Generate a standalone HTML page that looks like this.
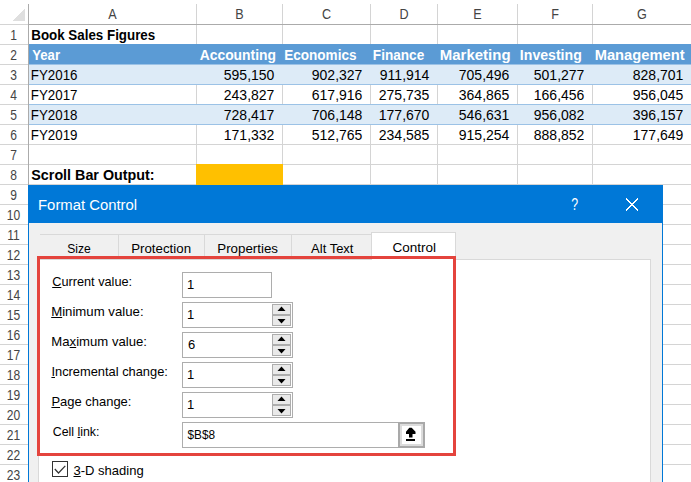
<!DOCTYPE html>
<html><head><meta charset="utf-8"><title>Format Control</title>
<style>html,body{margin:0;padding:0;background:#fff;width:691px;height:482px;overflow:hidden}svg{display:block}text{font-family:"Liberation Sans",sans-serif}</style>
</head><body>
<svg width="691" height="482" viewBox="0 0 691 482" font-family="Liberation Sans, sans-serif" shape-rendering="crispEdges"><rect x="0" y="0" width="691" height="482" fill="#ffffff" />
<polygon points="25.2,8.3 25.2,21 12.6,21" fill="#dfdfdf"/>
<rect x="0" y="24" width="28" height="1" fill="#d4d4d4" />
<rect x="0" y="44" width="28" height="1" fill="#d4d4d4" />
<rect x="0" y="64" width="28" height="1" fill="#d4d4d4" />
<rect x="0" y="84" width="28" height="1" fill="#d4d4d4" />
<rect x="0" y="104" width="28" height="1" fill="#d4d4d4" />
<rect x="0" y="124" width="28" height="1" fill="#d4d4d4" />
<rect x="0" y="144" width="28" height="1" fill="#d4d4d4" />
<rect x="0" y="164" width="28" height="1" fill="#d4d4d4" />
<rect x="0" y="184" width="28" height="1" fill="#d4d4d4" />
<rect x="0" y="204" width="28" height="1" fill="#d4d4d4" />
<rect x="0" y="224" width="28" height="1" fill="#d4d4d4" />
<rect x="0" y="244" width="28" height="1" fill="#d4d4d4" />
<rect x="0" y="264" width="28" height="1" fill="#d4d4d4" />
<rect x="0" y="284" width="28" height="1" fill="#d4d4d4" />
<rect x="0" y="304" width="28" height="1" fill="#d4d4d4" />
<rect x="0" y="324" width="28" height="1" fill="#d4d4d4" />
<rect x="0" y="344" width="28" height="1" fill="#d4d4d4" />
<rect x="0" y="364" width="28" height="1" fill="#d4d4d4" />
<rect x="0" y="384" width="28" height="1" fill="#d4d4d4" />
<rect x="0" y="404" width="28" height="1" fill="#d4d4d4" />
<rect x="0" y="424" width="28" height="1" fill="#d4d4d4" />
<rect x="0" y="444" width="28" height="1" fill="#d4d4d4" />
<rect x="0" y="464" width="28" height="1" fill="#d4d4d4" />
<rect x="29" y="44" width="662" height="1" fill="#d4d4d4" />
<rect x="29" y="64" width="662" height="1" fill="#d4d4d4" />
<rect x="29" y="84" width="662" height="1" fill="#d4d4d4" />
<rect x="29" y="104" width="662" height="1" fill="#d4d4d4" />
<rect x="29" y="124" width="662" height="1" fill="#d4d4d4" />
<rect x="29" y="144" width="662" height="1" fill="#d4d4d4" />
<rect x="29" y="164" width="662" height="1" fill="#d4d4d4" />
<rect x="29" y="184" width="662" height="1" fill="#d4d4d4" />
<rect x="29" y="204" width="662" height="1" fill="#d4d4d4" />
<rect x="29" y="224" width="662" height="1" fill="#d4d4d4" />
<rect x="29" y="244" width="662" height="1" fill="#d4d4d4" />
<rect x="29" y="264" width="662" height="1" fill="#d4d4d4" />
<rect x="29" y="284" width="662" height="1" fill="#d4d4d4" />
<rect x="29" y="304" width="662" height="1" fill="#d4d4d4" />
<rect x="29" y="324" width="662" height="1" fill="#d4d4d4" />
<rect x="29" y="344" width="662" height="1" fill="#d4d4d4" />
<rect x="29" y="364" width="662" height="1" fill="#d4d4d4" />
<rect x="29" y="384" width="662" height="1" fill="#d4d4d4" />
<rect x="29" y="404" width="662" height="1" fill="#d4d4d4" />
<rect x="29" y="424" width="662" height="1" fill="#d4d4d4" />
<rect x="29" y="444" width="662" height="1" fill="#d4d4d4" />
<rect x="29" y="464" width="662" height="1" fill="#d4d4d4" />
<rect x="196" y="4" width="1" height="20" fill="#d4d4d4" />
<rect x="196" y="25" width="1" height="457" fill="#d4d4d4" />
<rect x="282" y="4" width="1" height="20" fill="#d4d4d4" />
<rect x="282" y="25" width="1" height="457" fill="#d4d4d4" />
<rect x="370" y="4" width="1" height="20" fill="#d4d4d4" />
<rect x="370" y="25" width="1" height="457" fill="#d4d4d4" />
<rect x="437" y="4" width="1" height="20" fill="#d4d4d4" />
<rect x="437" y="25" width="1" height="457" fill="#d4d4d4" />
<rect x="517" y="4" width="1" height="20" fill="#d4d4d4" />
<rect x="517" y="25" width="1" height="457" fill="#d4d4d4" />
<rect x="592" y="4" width="1" height="20" fill="#d4d4d4" />
<rect x="592" y="25" width="1" height="457" fill="#d4d4d4" />
<rect x="28" y="24" width="663" height="1" fill="#ababab" />
<rect x="28" y="4" width="1" height="478" fill="#ababab" />
<rect x="29" y="44" width="662" height="20" fill="#5b9bd5" />
<rect x="29" y="64" width="662" height="21" fill="#ddebf7" />
<rect x="29" y="64" width="662" height="1" fill="#9bc2e6" />
<rect x="29" y="84" width="662" height="1" fill="#9bc2e6" />
<rect x="29" y="104" width="662" height="21" fill="#ddebf7" />
<rect x="29" y="104" width="662" height="1" fill="#9bc2e6" />
<rect x="29" y="124" width="662" height="1" fill="#9bc2e6" />
<rect x="196" y="164" width="87" height="21" fill="#ffc000" />
<rect x="28" y="185" width="635" height="297" fill="#0078d7" />
<rect x="29" y="223" width="633" height="259" fill="#f0f0f0" />
<path d="M626,198.5 L638,210.5 M638,198.5 L626,210.5" stroke="#ffffff" stroke-width="1.1" fill="none"/>
<rect x="40" y="234" width="331" height="1" fill="#d9d9d9" />
<rect x="118" y="234" width="1" height="25" fill="#d9d9d9" />
<rect x="204" y="234" width="1" height="25" fill="#d9d9d9" />
<rect x="291" y="234" width="1" height="25" fill="#d9d9d9" />
<rect x="38" y="259" width="613" height="223" fill="#d9d9d9" />
<rect x="39" y="260" width="611" height="222" fill="#ffffff" />
<rect x="371" y="232" width="85" height="28" fill="#d9d9d9" />
<rect x="372" y="233" width="83" height="27" fill="#ffffff" />
<rect x="38.5" y="257.5" width="416" height="197" fill="none" stroke="#e4443d" stroke-width="3"/>
<rect x="182" y="272" width="90" height="26" fill="#adadad" />
<rect x="183" y="273" width="88" height="24" fill="#ffffff" />
<rect x="182" y="302" width="111" height="26" fill="#adadad" />
<rect x="183" y="303" width="109" height="24" fill="#ffffff" />
<rect x="272" y="304" width="19" height="11" fill="#adadad" />
<rect x="273" y="305" width="17" height="9" fill="#e9e9e9" />
<polygon points="277.5,311 285.5,311 281.5,306.5" fill="#000" shape-rendering="auto"/>
<rect x="272" y="315" width="19" height="11" fill="#adadad" />
<rect x="273" y="316" width="17" height="9" fill="#e9e9e9" />
<polygon points="277.5,319 285.5,319 281.5,323.5" fill="#000" shape-rendering="auto"/>
<rect x="182" y="332" width="111" height="26" fill="#adadad" />
<rect x="183" y="333" width="109" height="24" fill="#ffffff" />
<rect x="272" y="334" width="19" height="11" fill="#adadad" />
<rect x="273" y="335" width="17" height="9" fill="#e9e9e9" />
<polygon points="277.5,341 285.5,341 281.5,336.5" fill="#000" shape-rendering="auto"/>
<rect x="272" y="345" width="19" height="11" fill="#adadad" />
<rect x="273" y="346" width="17" height="9" fill="#e9e9e9" />
<polygon points="277.5,349 285.5,349 281.5,353.5" fill="#000" shape-rendering="auto"/>
<rect x="182" y="362" width="111" height="26" fill="#adadad" />
<rect x="183" y="363" width="109" height="24" fill="#ffffff" />
<rect x="272" y="364" width="19" height="11" fill="#adadad" />
<rect x="273" y="365" width="17" height="9" fill="#e9e9e9" />
<polygon points="277.5,371 285.5,371 281.5,366.5" fill="#000" shape-rendering="auto"/>
<rect x="272" y="375" width="19" height="11" fill="#adadad" />
<rect x="273" y="376" width="17" height="9" fill="#e9e9e9" />
<polygon points="277.5,379 285.5,379 281.5,383.5" fill="#000" shape-rendering="auto"/>
<rect x="182" y="392" width="111" height="26" fill="#adadad" />
<rect x="183" y="393" width="109" height="24" fill="#ffffff" />
<rect x="272" y="394" width="19" height="11" fill="#adadad" />
<rect x="273" y="395" width="17" height="9" fill="#e9e9e9" />
<polygon points="277.5,401 285.5,401 281.5,396.5" fill="#000" shape-rendering="auto"/>
<rect x="272" y="405" width="19" height="11" fill="#adadad" />
<rect x="273" y="406" width="17" height="9" fill="#e9e9e9" />
<polygon points="277.5,409 285.5,409 281.5,413.5" fill="#000" shape-rendering="auto"/>
<rect x="182" y="422" width="217" height="26" fill="#adadad" />
<rect x="183" y="423" width="215" height="24" fill="#ffffff" />
<rect x="398" y="422" width="27" height="26" fill="#a9a9a9" />
<rect x="400" y="424" width="23" height="22" fill="#dcdcdc" />
<rect x="402" y="426" width="19" height="18" fill="#ffffff" />
<path d="M409.3,427.8 L411.7,427.8 L415.5,431.8 L415.5,434 L412.5,434 L412.5,437.5 L409,437.5 L409,434 L406,434 L406,431.8 Z" fill="#000" shape-rendering="auto"/>
<rect x="406" y="439" width="9" height="2" fill="#000" />
<rect x="52" y="461" width="16" height="16" fill="#333333" />
<rect x="53" y="462" width="14" height="14" fill="#ffffff" />
<path d="M54.8,469 L58.5,473 L65.3,465.8" stroke="#333" stroke-width="1.2" fill="none" shape-rendering="auto"/>
<g shape-rendering="auto"><text x="112.50" text-anchor="middle" textLength="8.41" lengthAdjust="spacingAndGlyphs" y="19" font-size="14" font-weight="normal" fill="#444444">A</text>
<text x="239.50" text-anchor="middle" textLength="8.41" lengthAdjust="spacingAndGlyphs" y="19" font-size="14" font-weight="normal" fill="#444444">B</text>
<text x="326.50" text-anchor="middle" textLength="9.11" lengthAdjust="spacingAndGlyphs" y="19" font-size="14" font-weight="normal" fill="#444444">C</text>
<text x="404.00" text-anchor="middle" textLength="9.11" lengthAdjust="spacingAndGlyphs" y="19" font-size="14" font-weight="normal" fill="#444444">D</text>
<text x="477.50" text-anchor="middle" textLength="8.41" lengthAdjust="spacingAndGlyphs" y="19" font-size="14" font-weight="normal" fill="#444444">E</text>
<text x="555.00" text-anchor="middle" textLength="7.71" lengthAdjust="spacingAndGlyphs" y="19" font-size="14" font-weight="normal" fill="#444444">F</text>
<text x="642.00" text-anchor="middle" textLength="9.80" lengthAdjust="spacingAndGlyphs" y="19" font-size="14" font-weight="normal" fill="#444444">G</text>
<text x="13.50" text-anchor="middle" textLength="6.71" lengthAdjust="spacingAndGlyphs" y="40" font-size="14" font-weight="normal" fill="#444444">1</text>
<text x="13.50" text-anchor="middle" textLength="6.71" lengthAdjust="spacingAndGlyphs" y="60" font-size="14" font-weight="normal" fill="#444444">2</text>
<text x="13.50" text-anchor="middle" textLength="6.71" lengthAdjust="spacingAndGlyphs" y="80" font-size="14" font-weight="normal" fill="#444444">3</text>
<text x="13.50" text-anchor="middle" textLength="6.71" lengthAdjust="spacingAndGlyphs" y="100" font-size="14" font-weight="normal" fill="#444444">4</text>
<text x="13.50" text-anchor="middle" textLength="6.71" lengthAdjust="spacingAndGlyphs" y="120" font-size="14" font-weight="normal" fill="#444444">5</text>
<text x="13.50" text-anchor="middle" textLength="6.71" lengthAdjust="spacingAndGlyphs" y="140" font-size="14" font-weight="normal" fill="#444444">6</text>
<text x="13.50" text-anchor="middle" textLength="6.71" lengthAdjust="spacingAndGlyphs" y="160" font-size="14" font-weight="normal" fill="#444444">7</text>
<text x="13.50" text-anchor="middle" textLength="6.71" lengthAdjust="spacingAndGlyphs" y="180" font-size="14" font-weight="normal" fill="#444444">8</text>
<text x="13.50" text-anchor="middle" textLength="6.71" lengthAdjust="spacingAndGlyphs" y="200" font-size="14" font-weight="normal" fill="#444444">9</text>
<text x="13.50" text-anchor="middle" textLength="13.40" lengthAdjust="spacingAndGlyphs" y="220" font-size="14" font-weight="normal" fill="#444444">10</text>
<text x="13.50" text-anchor="middle" textLength="12.51" lengthAdjust="spacingAndGlyphs" y="240" font-size="14" font-weight="normal" fill="#444444">11</text>
<text x="13.50" text-anchor="middle" textLength="13.40" lengthAdjust="spacingAndGlyphs" y="260" font-size="14" font-weight="normal" fill="#444444">12</text>
<text x="13.50" text-anchor="middle" textLength="13.40" lengthAdjust="spacingAndGlyphs" y="280" font-size="14" font-weight="normal" fill="#444444">13</text>
<text x="13.50" text-anchor="middle" textLength="13.40" lengthAdjust="spacingAndGlyphs" y="300" font-size="14" font-weight="normal" fill="#444444">14</text>
<text x="13.50" text-anchor="middle" textLength="13.40" lengthAdjust="spacingAndGlyphs" y="320" font-size="14" font-weight="normal" fill="#444444">15</text>
<text x="13.50" text-anchor="middle" textLength="13.40" lengthAdjust="spacingAndGlyphs" y="340" font-size="14" font-weight="normal" fill="#444444">16</text>
<text x="13.50" text-anchor="middle" textLength="13.40" lengthAdjust="spacingAndGlyphs" y="360" font-size="14" font-weight="normal" fill="#444444">17</text>
<text x="13.50" text-anchor="middle" textLength="13.40" lengthAdjust="spacingAndGlyphs" y="380" font-size="14" font-weight="normal" fill="#444444">18</text>
<text x="13.50" text-anchor="middle" textLength="13.40" lengthAdjust="spacingAndGlyphs" y="400" font-size="14" font-weight="normal" fill="#444444">19</text>
<text x="13.50" text-anchor="middle" textLength="13.40" lengthAdjust="spacingAndGlyphs" y="420" font-size="14" font-weight="normal" fill="#444444">20</text>
<text x="13.50" text-anchor="middle" textLength="13.40" lengthAdjust="spacingAndGlyphs" y="440" font-size="14" font-weight="normal" fill="#444444">21</text>
<text x="13.50" text-anchor="middle" textLength="13.40" lengthAdjust="spacingAndGlyphs" y="460" font-size="14" font-weight="normal" fill="#444444">22</text>
<text x="13.50" text-anchor="middle" textLength="13.40" lengthAdjust="spacingAndGlyphs" y="480" font-size="14" font-weight="normal" fill="#444444">23</text>
<text x="31.25" textLength="123.99" lengthAdjust="spacingAndGlyphs" y="40" font-size="14" font-weight="bold" fill="#000">Book Sales Figures</text>
<text x="32.20" textLength="27.82" lengthAdjust="spacingAndGlyphs" y="60" font-size="14" font-weight="bold" fill="#ffffff">Year</text>
<text x="199.70" textLength="76.30" lengthAdjust="spacingAndGlyphs" y="60" font-size="14" font-weight="bold" fill="#ffffff">Accounting</text>
<text x="284.23" textLength="72.28" lengthAdjust="spacingAndGlyphs" y="60" font-size="14" font-weight="bold" fill="#ffffff">Economics</text>
<text x="372.83" textLength="51.38" lengthAdjust="spacingAndGlyphs" y="60" font-size="14" font-weight="bold" fill="#ffffff">Finance</text>
<text x="439.83" textLength="70.70" lengthAdjust="spacingAndGlyphs" y="60" font-size="14" font-weight="bold" fill="#ffffff">Marketing</text>
<text x="519.89" textLength="61.88" lengthAdjust="spacingAndGlyphs" y="60" font-size="14" font-weight="bold" fill="#ffffff">Investing</text>
<text x="594.65" textLength="89.91" lengthAdjust="spacingAndGlyphs" y="60" font-size="14" font-weight="bold" fill="#ffffff">Management</text>
<text x="30.75" textLength="46.80" lengthAdjust="spacingAndGlyphs" y="80" font-size="14" font-weight="normal" fill="#000">FY2016</text>
<text x="274.40" text-anchor="end" textLength="50.61" lengthAdjust="spacingAndGlyphs" y="80" font-size="14" font-weight="normal" fill="#000">595,150</text>
<text x="362.40" text-anchor="end" textLength="50.61" lengthAdjust="spacingAndGlyphs" y="80" font-size="14" font-weight="normal" fill="#000">902,327</text>
<text x="429.40" text-anchor="end" textLength="49.58" lengthAdjust="spacingAndGlyphs" y="80" font-size="14" font-weight="normal" fill="#000">911,914</text>
<text x="509.40" text-anchor="end" textLength="50.61" lengthAdjust="spacingAndGlyphs" y="80" font-size="14" font-weight="normal" fill="#000">705,496</text>
<text x="584.40" text-anchor="end" textLength="50.61" lengthAdjust="spacingAndGlyphs" y="80" font-size="14" font-weight="normal" fill="#000">501,277</text>
<text x="683.40" text-anchor="end" textLength="50.61" lengthAdjust="spacingAndGlyphs" y="80" font-size="14" font-weight="normal" fill="#000">828,701</text>
<text x="30.75" textLength="46.80" lengthAdjust="spacingAndGlyphs" y="100" font-size="14" font-weight="normal" fill="#000">FY2017</text>
<text x="274.40" text-anchor="end" textLength="50.61" lengthAdjust="spacingAndGlyphs" y="100" font-size="14" font-weight="normal" fill="#000">243,827</text>
<text x="362.40" text-anchor="end" textLength="50.61" lengthAdjust="spacingAndGlyphs" y="100" font-size="14" font-weight="normal" fill="#000">617,916</text>
<text x="429.40" text-anchor="end" textLength="50.61" lengthAdjust="spacingAndGlyphs" y="100" font-size="14" font-weight="normal" fill="#000">275,735</text>
<text x="509.40" text-anchor="end" textLength="50.61" lengthAdjust="spacingAndGlyphs" y="100" font-size="14" font-weight="normal" fill="#000">364,865</text>
<text x="584.40" text-anchor="end" textLength="50.61" lengthAdjust="spacingAndGlyphs" y="100" font-size="14" font-weight="normal" fill="#000">166,456</text>
<text x="683.40" text-anchor="end" textLength="50.61" lengthAdjust="spacingAndGlyphs" y="100" font-size="14" font-weight="normal" fill="#000">956,045</text>
<text x="30.75" textLength="46.80" lengthAdjust="spacingAndGlyphs" y="120" font-size="14" font-weight="normal" fill="#000">FY2018</text>
<text x="274.40" text-anchor="end" textLength="50.61" lengthAdjust="spacingAndGlyphs" y="120" font-size="14" font-weight="normal" fill="#000">728,417</text>
<text x="362.40" text-anchor="end" textLength="50.61" lengthAdjust="spacingAndGlyphs" y="120" font-size="14" font-weight="normal" fill="#000">706,148</text>
<text x="429.40" text-anchor="end" textLength="50.61" lengthAdjust="spacingAndGlyphs" y="120" font-size="14" font-weight="normal" fill="#000">177,670</text>
<text x="509.40" text-anchor="end" textLength="50.61" lengthAdjust="spacingAndGlyphs" y="120" font-size="14" font-weight="normal" fill="#000">546,631</text>
<text x="584.40" text-anchor="end" textLength="50.61" lengthAdjust="spacingAndGlyphs" y="120" font-size="14" font-weight="normal" fill="#000">956,082</text>
<text x="683.40" text-anchor="end" textLength="50.61" lengthAdjust="spacingAndGlyphs" y="120" font-size="14" font-weight="normal" fill="#000">396,157</text>
<text x="30.75" textLength="46.80" lengthAdjust="spacingAndGlyphs" y="140" font-size="14" font-weight="normal" fill="#000">FY2019</text>
<text x="274.40" text-anchor="end" textLength="50.61" lengthAdjust="spacingAndGlyphs" y="140" font-size="14" font-weight="normal" fill="#000">171,332</text>
<text x="362.40" text-anchor="end" textLength="50.61" lengthAdjust="spacingAndGlyphs" y="140" font-size="14" font-weight="normal" fill="#000">512,765</text>
<text x="429.40" text-anchor="end" textLength="50.61" lengthAdjust="spacingAndGlyphs" y="140" font-size="14" font-weight="normal" fill="#000">234,585</text>
<text x="509.40" text-anchor="end" textLength="50.61" lengthAdjust="spacingAndGlyphs" y="140" font-size="14" font-weight="normal" fill="#000">915,254</text>
<text x="584.40" text-anchor="end" textLength="50.61" lengthAdjust="spacingAndGlyphs" y="140" font-size="14" font-weight="normal" fill="#000">888,852</text>
<text x="683.40" text-anchor="end" textLength="50.61" lengthAdjust="spacingAndGlyphs" y="140" font-size="14" font-weight="normal" fill="#000">177,649</text>
<text x="31.30" textLength="123.28" lengthAdjust="spacingAndGlyphs" y="179.5" font-size="14" font-weight="bold" fill="#000">Scroll Bar Output:</text>
<text x="38.04" textLength="99.12" lengthAdjust="spacingAndGlyphs" y="209.5" font-size="15.5" font-weight="normal" fill="#ffffff">Format Control</text>
<text x="571.25" textLength="6.89" lengthAdjust="spacingAndGlyphs" y="210" font-size="16.5" font-weight="normal" fill="#ffffff">?</text>
<text x="67.27" textLength="23.51" lengthAdjust="spacingAndGlyphs" y="252.5" font-size="13" font-weight="normal" fill="#000">Size</text>
<text x="131.18" textLength="59.88" lengthAdjust="spacingAndGlyphs" y="252.5" font-size="13" font-weight="normal" fill="#000">Protection</text>
<text x="217.28" textLength="60.68" lengthAdjust="spacingAndGlyphs" y="252.5" font-size="13" font-weight="normal" fill="#000">Properties</text>
<text x="311.10" textLength="42.39" lengthAdjust="spacingAndGlyphs" y="252.5" font-size="13" font-weight="normal" fill="#000">Alt Text</text>
<text x="392.50" textLength="43.56" lengthAdjust="spacingAndGlyphs" y="252" font-size="13" font-weight="normal" fill="#000">Control</text>
<text x="52.20" textLength="79.94" lengthAdjust="spacingAndGlyphs" y="286" font-size="13" font-weight="normal" fill="#000">Current value:</text>
<text x="51.19" textLength="92.36" lengthAdjust="spacingAndGlyphs" y="316" font-size="13" font-weight="normal" fill="#000">Minimum value:</text>
<text x="51.39" textLength="95.56" lengthAdjust="spacingAndGlyphs" y="346" font-size="13" font-weight="normal" fill="#000">Maximum value:</text>
<text x="51.41" textLength="116.48" lengthAdjust="spacingAndGlyphs" y="376" font-size="13" font-weight="normal" fill="#000">Incremental change:</text>
<text x="51.40" textLength="80.03" lengthAdjust="spacingAndGlyphs" y="406" font-size="13" font-weight="normal" fill="#000">Page change:</text>
<text x="52.80" textLength="46.67" lengthAdjust="spacingAndGlyphs" y="436" font-size="13" font-weight="normal" fill="#000">Cell link:</text>
<text x="187.00" y="289" font-size="13" font-weight="normal" fill="#000">1</text>
<text x="187.00" y="319" font-size="13" font-weight="normal" fill="#000">1</text>
<text x="188.00" y="349" font-size="13" font-weight="normal" fill="#000">6</text>
<text x="187.00" y="379" font-size="13" font-weight="normal" fill="#000">1</text>
<text x="187.00" y="409" font-size="13" font-weight="normal" fill="#000">1</text>
<text x="187.50" textLength="27.64" lengthAdjust="spacingAndGlyphs" y="439" font-size="13" font-weight="normal" fill="#000">$B$8</text>
<text x="73.50" textLength="70.21" lengthAdjust="spacingAndGlyphs" y="475" font-size="13" font-weight="normal" fill="#000">3-D shading</text>
<rect x="52.20" y="287" width="9.19" height="1" fill="#000"/>
<rect x="51.19" y="317" width="11.00" height="1" fill="#000"/>
<rect x="69.63" y="347" width="6.56" height="1" fill="#000"/>
<rect x="51.41" y="377" width="3.58" height="1" fill="#000"/>
<rect x="51.40" y="407" width="8.65" height="1" fill="#000"/>
<rect x="77.51" y="437" width="2.75" height="1" fill="#000"/>
<rect x="73.50" y="476" width="7.24" height="1" fill="#000"/></g></svg>
</body></html>
